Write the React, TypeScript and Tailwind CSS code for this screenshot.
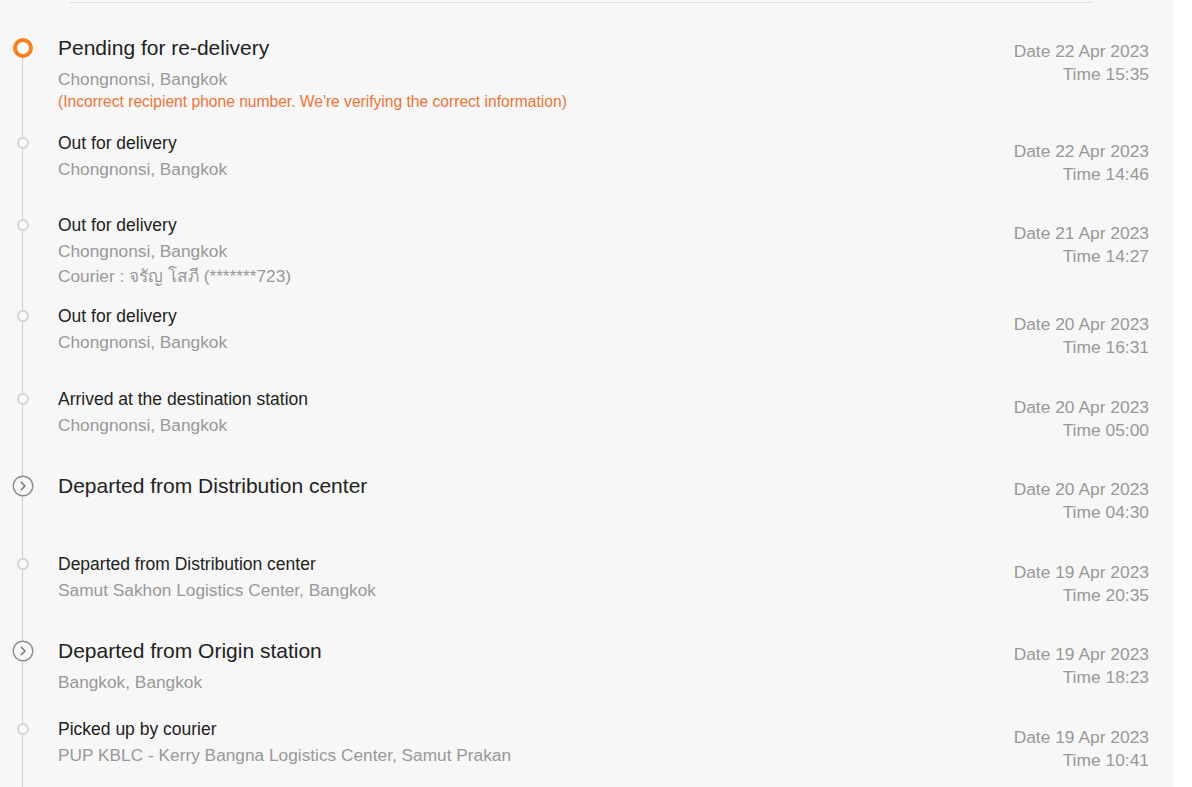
import React from "react";

type Step = {
  title: string;
  big?: boolean;
  icon: "current" | "dot" | "chevron";
  place?: string;
  note?: string;
  courier?: string;
  date: string;
  time: string;
  h: string;
};

const steps: Step[] = [
  {
    title: "Pending for re-delivery",
    big: true,
    icon: "current",
    place: "Chongnonsi, Bangkok",
    note: "(Incorrect recipient phone number. We're verifying the correct information)",
    date: "22 Apr 2023",
    time: "15:35",
    h: "h-[96px]",
  },
  { title: "Out for delivery", icon: "dot", place: "Chongnonsi, Bangkok", date: "22 Apr 2023", time: "14:46", h: "h-[82px]" },
  {
    title: "Out for delivery",
    icon: "dot",
    place: "Chongnonsi, Bangkok",
    courier: "Courier : จรัญ โสภี (*******723)",
    date: "21 Apr 2023",
    time: "14:27",
    h: "h-[91px]",
  },
  { title: "Out for delivery", icon: "dot", place: "Chongnonsi, Bangkok", date: "20 Apr 2023", time: "16:31", h: "h-[83px]" },
  { title: "Arrived at the destination station", icon: "dot", place: "Chongnonsi, Bangkok", date: "20 Apr 2023", time: "05:00", h: "h-[86px]" },
  { title: "Departed from Distribution center", big: true, icon: "chevron", date: "20 Apr 2023", time: "04:30", h: "h-[79px]" },
  {
    title: "Departed from Distribution center",
    icon: "dot",
    place: "Samut Sakhon Logistics Center, Bangkok",
    date: "19 Apr 2023",
    time: "20:35",
    h: "h-[86px]",
  },
  { title: "Departed from Origin station", big: true, icon: "chevron", place: "Bangkok, Bangkok", date: "19 Apr 2023", time: "18:23", h: "h-[79px]" },
  {
    title: "Picked up by courier",
    icon: "dot",
    place: "PUP KBLC - Kerry Bangna Logistics Center, Samut Prakan",
    date: "19 Apr 2023",
    time: "10:41",
    h: "h-[80px]",
  },
];

function Marker({ kind }: { kind: Step["icon"] }) {
  if (kind === "current") {
    return <span className="block h-[20px] w-[20px] rounded-full border-[4px] border-[#f5821f] bg-white" />;
  }
  if (kind === "chevron") {
    return (
      <svg width="22" height="22" viewBox="0 0 22 22" className="block">
        <circle cx="11" cy="11" r="9.8" fill="#f7f7f7" stroke="#8c8c8c" strokeWidth="1.4" />
        <path d="M9.3 7.2 L13 11 L9.3 14.8" fill="none" stroke="#7a7a7a" strokeWidth="1.6" strokeLinecap="round" strokeLinejoin="round" />
      </svg>
    );
  }
  return <span className="block h-[12px] w-[12px] rounded-full border-2 border-[#d4d4d4] bg-[#fafafa]" />;
}

export default function App() {
  return (
    <div className="h-[787px] w-[1192px] overflow-hidden bg-white font-['Liberation_Sans',Arial,sans-serif]">
      <div className="h-full w-[1174px] bg-[#f7f7f7] pt-[2px]">
        <div className="ml-[70px] w-[1022px] border-t border-[#dedede]" />
        <div className="relative mt-[31px]">
          <div className="absolute bottom-0 left-[22px] top-[20px] w-px bg-[#cccccc]" />
          {steps.map((s, i) => (
            <div key={i} className={`relative flex ${s.h}`}>
              <div className={`flex w-[46px] shrink-0 items-center justify-center ${s.big ? "h-[28px]" : "h-[26px]"}`}>
                <Marker kind={s.icon} />
              </div>
              <div className="ml-[12px] flex-1">
                <div className={s.big ? "text-[21px] leading-[28px] text-[#222]" : "text-[17.5px] leading-[26px] text-[#222]"}>
                  {s.title}
                </div>
                {s.place && (
                  <div className={`text-[17.3px] leading-[26px] text-[#999] ${s.big ? "mt-[4px]" : ""}`}>{s.place}</div>
                )}
                {s.note && <div className="text-[15.6px] leading-[20px] text-[#ee7438]">{s.note}</div>}
                {s.courier && (
                  <div className="font-['Liberation_Sans','Noto_Sans',sans-serif] text-[17.3px] leading-[24px] text-[#999]">{s.courier}</div>
                )}
              </div>
              <div className={`pr-[25px] text-right text-[17.4px] leading-[23px] text-[#999] ${s.big ? "mt-[6px]" : "mt-[10px]"}`}>
                <div>Date {s.date}</div>
                <div>Time {s.time}</div>
              </div>
            </div>
          ))}
        </div>
      </div>
    </div>
  );
}
